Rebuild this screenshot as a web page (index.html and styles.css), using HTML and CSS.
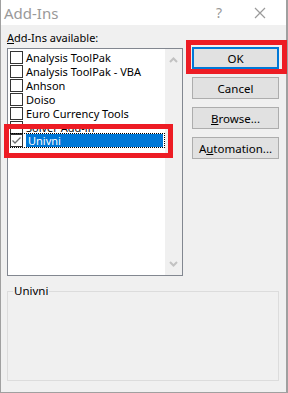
FILE: index.html
```html
<!DOCTYPE html>
<html lang="en">
<head>
    <meta charset="UTF-8">
    <title>Add-Ins</title>
    <link rel="stylesheet" href="styles.css">
</head>
<body>
    <div class="dialog">
        <!-- Title bar -->
        <div class="titlebar">
            <span class="title">Add-Ins</span>
            <span class="help">?</span>
            <span class="close">
                <svg width="12" height="12" viewBox="0 0 12 12"><path d="M1 1 L11 11 M11 1 L1 11" stroke="#9a9a9a" stroke-width="1.2" fill="none"/></svg>
            </span>
        </div>

        <div class="main">
            <!-- List of add-ins -->
            <div class="list-col">
                <div class="label"><u>A</u>dd-Ins available:</div>
                <div class="listbox">
                    <ul class="items">
                        <li><span class="check"></span><span class="name">Analysis ToolPak</span></li>
                        <li><span class="check"></span><span class="name">Analysis ToolPak - VBA</span></li>
                        <li><span class="check"></span><span class="name">Anhson</span></li>
                        <li><span class="check"></span><span class="name">Doiso</span></li>
                        <li><span class="check"></span><span class="name">Euro Currency Tools</span></li>
                        <li><span class="check"></span><span class="name">Solver Add-in</span></li>
                        <li class="selected">
                            <span class="check checked">
                                <svg width="11" height="11" viewBox="0 0 11 11"><path d="M1.5 5.5 L4 8 L9.5 2.5" stroke="#6d6d6d" stroke-width="1.3" fill="none"/></svg>
                            </span>
                            <span class="name">Univni</span>
                        </li>
                    </ul>
                    <div class="scrollbar">
                        <svg width="9" height="6" viewBox="0 0 9 6"><path d="M1 5 L4.5 1.5 L8 5" stroke="#c2c2c2" stroke-width="2" fill="none"/></svg>
                        <svg width="9" height="6" viewBox="0 0 9 6"><path d="M1 1 L4.5 4.5 L8 1" stroke="#c2c2c2" stroke-width="2" fill="none"/></svg>
                    </div>
                </div>
            </div>

            <!-- Buttons -->
            <div class="buttons">
                <button class="btn btn-default">OK</button>
                <button class="btn">Cancel</button>
                <button class="btn"><u>B</u>rowse...</button>
                <button class="btn">A<u>u</u>tomation...</button>
            </div>
        </div>

        <!-- Description -->
        <fieldset class="desc">
            <legend>Univni</legend>
        </fieldset>

        <!-- Annotation marks -->
        <div class="mark mark-list"></div>
        <div class="mark mark-ok"></div>
    </div>
</body>
</html>
```

FILE: styles.css
```css
* {
    margin: 0;
    padding: 0;
    box-sizing: border-box;
}

body {
    font-family: "Noto Sans", "Liberation Sans", sans-serif;
    font-size: 11px;
    color: #000;
    background-color: #fff;
}

.dialog {
    position: relative;
    width: 288px;
    height: 393px;
    background-color: #f0f0f0;
    border-left: 1px solid #a0a0a0;
    border-right: 2px solid #a0a0a0;
    border-bottom: 1px solid #a0a0a0;
}

.titlebar {
    height: 25px;
    background-color: #fff;
    display: flex;
    align-items: center;
    color: #999;
}

.title {
    font-size: 15px;
    padding-left: 3px;
    flex: 1;
}

.help {
    font-size: 14px;
    width: 20px;
    margin-right: 18px;
}

.close {
    display: flex;
    width: 24px;
    margin-right: 8px;
}

.main {
    display: flex;
    gap: 9px;
    padding: 5px 0 0 6px;
}

.label {
    height: 18px;
    line-height: 16px;
}

.listbox {
    width: 176px;
    height: 228px;
    border: 1px solid #828790;
    background-color: #fff;
    display: flex;
}

.items {
    list-style: none;
    flex: 1;
    padding-top: 1px;
}

.items li {
    height: 14px;
    display: flex;
    align-items: center;
    line-height: 13px;
    white-space: nowrap;
    padding-left: 2px;
}

.check {
    width: 13px;
    height: 13px;
    border: 1px solid #333;
    background-color: #fff;
    margin-right: 3px;
    display: flex;
    align-items: center;
    justify-content: center;
}

.items li.selected {
    outline: 1px dotted #000;
    outline-offset: -1px;
    margin-top: -1px;
    height: 15px;
    padding-left: 2px;
}

.selected .name {
    flex: 1;
    background-color: #0078d7;
    color: #fff;
    padding-left: 2px;
    margin-right: 2px;
    line-height: 13px;
}

.scrollbar {
    width: 17px;
    background-color: #f0f0f0;
    display: flex;
    flex-direction: column;
    justify-content: space-between;
    align-items: center;
    padding: 8px 0 8px;
}

.buttons {
    display: flex;
    flex-direction: column;
    gap: 8px;
    margin-top: 17px;
}

.btn {
    width: 87px;
    height: 22px;
    font-family: inherit;
    font-size: 11.5px;
    background-color: #e1e1e1;
    border: 1px solid #adadad;
    color: #000;
}

.btn-default {
    border: 2px solid #0078d7;
}

.desc {
    margin: 8px 0 0 6px;
    width: 272px;
    height: 97px;
    border: 1px solid #dcdcdc;
}

.desc legend {
    margin-left: 5px;
    padding: 0 1px;
    line-height: 14px;
    font-size: 11.5px;
}

/* red annotation frames */
.mark {
    position: absolute;
    border: 5px solid #ed1c24;
}

.mark-list {
    left: 3px;
    top: 124px;
    width: 169px;
    height: 34px;
}

.mark-ok {
    left: 185px;
    top: 40px;
    width: 101px;
    height: 34px;
}
```
